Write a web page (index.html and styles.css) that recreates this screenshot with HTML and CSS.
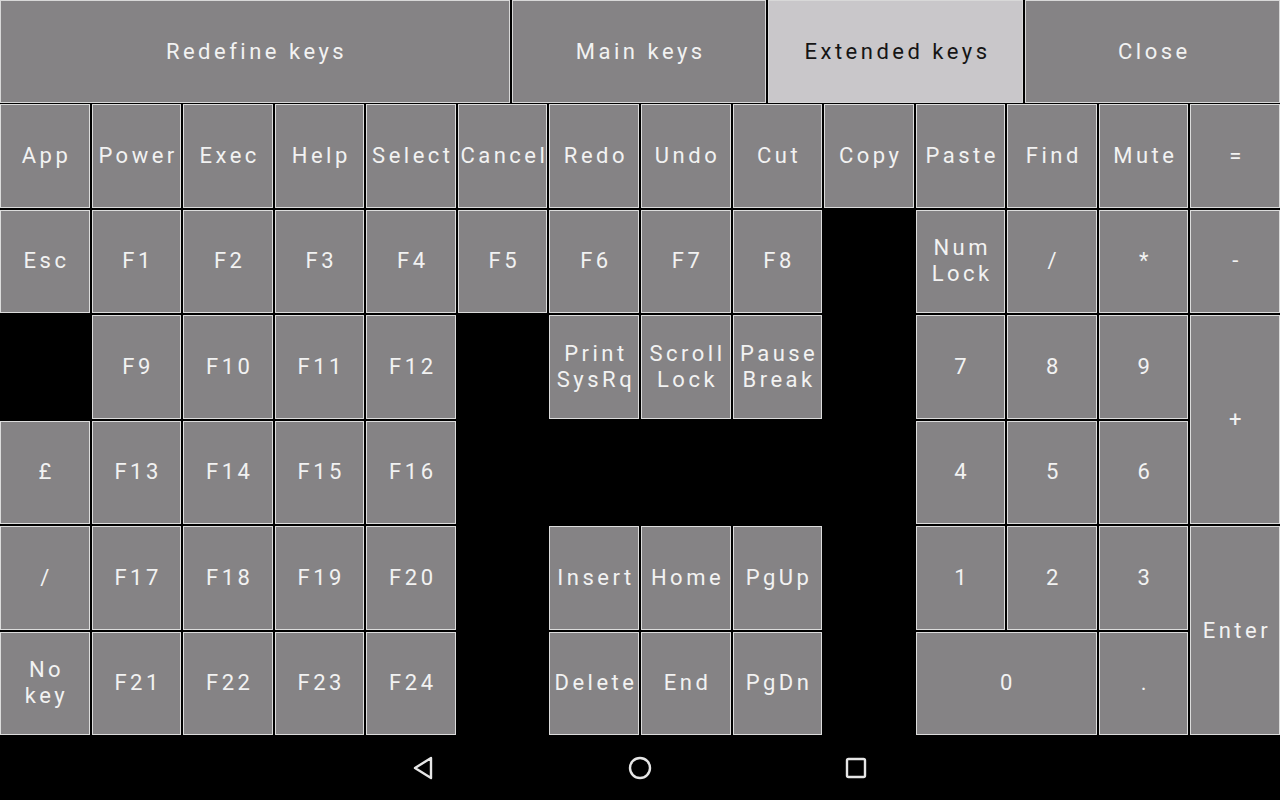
FILE: index.html
```html
<!DOCTYPE html>
<html>
<head>
    <meta charset="utf-8">
    <title>Extended keys</title>
    <link rel="stylesheet" href="styles.css">
</head>
<body>
    <div class="screen">
        <!-- Top tabs -->
        <div class="tabs">
            <div class="tab">Redefine keys</div>
            <div class="tab">Main keys</div>
            <div class="tab active">Extended keys</div>
            <div class="tab">Close</div>
        </div>

        <!-- Extended keyboard -->
        <div class="keypad">
            <!-- Row 1 -->
            <div class="key">App</div>
            <div class="key">Power</div>
            <div class="key">Exec</div>
            <div class="key">Help</div>
            <div class="key">Select</div>
            <div class="key">Cancel</div>
            <div class="key">Redo</div>
            <div class="key">Undo</div>
            <div class="key">Cut</div>
            <div class="key">Copy</div>
            <div class="key">Paste</div>
            <div class="key">Find</div>
            <div class="key">Mute</div>
            <div class="key">=</div>

            <!-- Row 2 -->
            <div class="key">Esc</div>
            <div class="key">F1</div>
            <div class="key">F2</div>
            <div class="key">F3</div>
            <div class="key">F4</div>
            <div class="key">F5</div>
            <div class="key">F6</div>
            <div class="key">F7</div>
            <div class="key">F8</div>
            <div class="empty"></div>
            <div class="key">Num<br>Lock</div>
            <div class="key">/</div>
            <div class="key">*</div>
            <div class="key">-</div>

            <!-- Row 3 -->
            <div class="empty"></div>
            <div class="key">F9</div>
            <div class="key">F10</div>
            <div class="key">F11</div>
            <div class="key">F12</div>
            <div class="empty"></div>
            <div class="key">Print<br>SysRq</div>
            <div class="key">Scroll<br>Lock</div>
            <div class="key">Pause<br>Break</div>
            <div class="empty"></div>
            <div class="key">7</div>
            <div class="key">8</div>
            <div class="key">9</div>
            <div class="key tall">+</div>

            <!-- Row 4 -->
            <div class="key">£</div>
            <div class="key">F13</div>
            <div class="key">F14</div>
            <div class="key">F15</div>
            <div class="key">F16</div>
            <div class="empty"></div>
            <div class="empty"></div>
            <div class="empty"></div>
            <div class="empty"></div>
            <div class="empty"></div>
            <div class="key">4</div>
            <div class="key">5</div>
            <div class="key">6</div>

            <!-- Row 5 -->
            <div class="key">/</div>
            <div class="key">F17</div>
            <div class="key">F18</div>
            <div class="key">F19</div>
            <div class="key">F20</div>
            <div class="empty"></div>
            <div class="key">Insert</div>
            <div class="key">Home</div>
            <div class="key">PgUp</div>
            <div class="empty"></div>
            <div class="key">1</div>
            <div class="key">2</div>
            <div class="key">3</div>
            <div class="key tall">Enter</div>

            <!-- Row 6 -->
            <div class="key">No<br>key</div>
            <div class="key">F21</div>
            <div class="key">F22</div>
            <div class="key">F23</div>
            <div class="key">F24</div>
            <div class="empty"></div>
            <div class="key">Delete</div>
            <div class="key">End</div>
            <div class="key">PgDn</div>
            <div class="empty"></div>
            <div class="key wide">0</div>
            <div class="key">.</div>
        </div>

        <!-- Android navigation bar -->
        <div class="navbar">
            <svg class="nav-icon" width="28" height="28" viewBox="0 0 28 28">
                <path d="M21 4 L5 14 L21 24 Z" fill="none" stroke="#e6e6e6" stroke-width="2.4" stroke-linejoin="round"/>
            </svg>
            <svg class="nav-icon" width="28" height="28" viewBox="0 0 28 28">
                <circle cx="14" cy="14" r="10" fill="none" stroke="#e6e6e6" stroke-width="2.4"/>
            </svg>
            <svg class="nav-icon" width="28" height="28" viewBox="0 0 28 28">
                <rect x="5" y="5" width="18" height="18" rx="1.5" fill="none" stroke="#e6e6e6" stroke-width="2.4"/>
            </svg>
        </div>
    </div>
</body>
</html>
```

FILE: styles.css
```css
* {
    margin: 0;
    box-sizing: border-box;
}

body {
    background-color: black;
    font-family: Roboto, "Liberation Sans", sans-serif;
}

.screen {
    width: 1280px;
    height: 800px;
    display: flex;
    flex-direction: column;
}

/* Top tabs */
.tabs {
    display: grid;
    grid-template-columns: 2fr 1fr 1fr 1fr;
    gap: 2px;
    height: 103px;
    margin-bottom: 1px;
}

.tab {
    display: flex;
    align-items: center;
    justify-content: center;
    padding-left: 3.5px;
    background-color: #858385;
    border: 1px solid #d8d8d8;
    color: #f2f2f2;
    font-size: 22px;
    letter-spacing: 3.5px;
}

.tab.active {
    background-color: #c9c7ca;
    color: #151515;
}

/* Keypad */
.keypad {
    display: grid;
    grid-template-columns: repeat(14, 1fr);
    grid-template-rows: repeat(6, 1fr);
    gap: 2px;
    height: 631px;
}

.key {
    display: flex;
    align-items: center;
    justify-content: center;
    text-align: center;
    padding-left: 3.5px;
    background-color: #858385;
    border: 1px solid #dcdcdc;
    color: #f2f2f2;
    font-size: 22px;
    line-height: 26px;
    letter-spacing: 3.5px;
    white-space: nowrap;
    overflow: hidden;
}

.key.tall {
    grid-row: span 2;
}

.key.wide {
    grid-column: span 2;
}

.empty {
    background-color: black;
}

/* Navigation bar */
.navbar {
    flex: 1;
    display: flex;
    align-items: center;
    justify-content: center;
    gap: 188px;
    background-color: black;
}
```
